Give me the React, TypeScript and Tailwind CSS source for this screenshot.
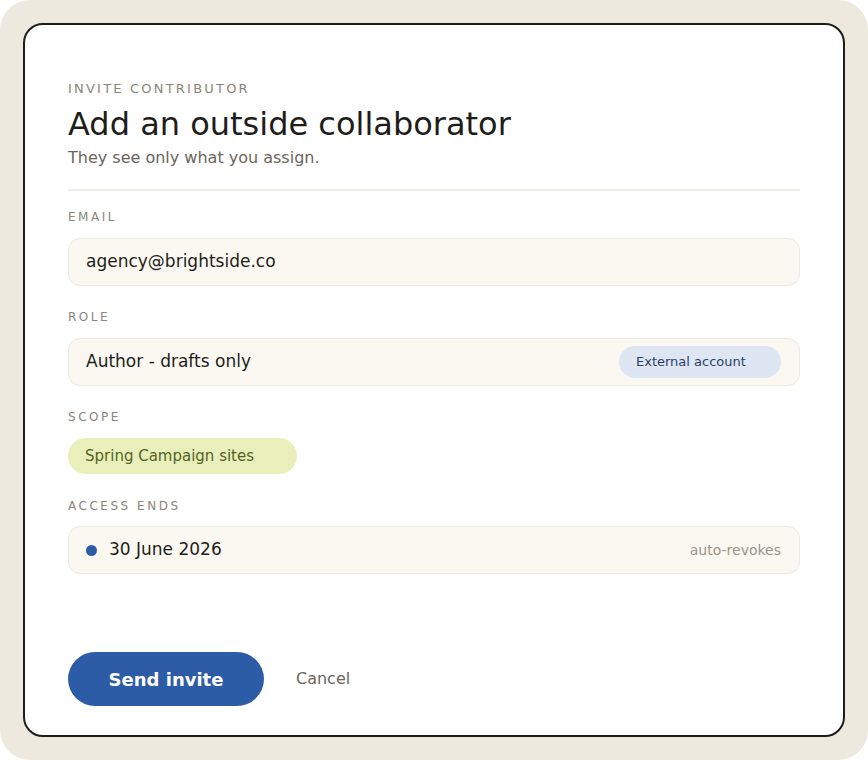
import React from "react";

const Label = ({ children, className = "" }: { children: React.ReactNode; className?: string }) => (
  <div className={`text-[12px] leading-[16px] tracking-[0.21em] text-[#8a857c] ${className}`}>{children}</div>
);

export default function App() {
  return (
    <div className="w-[868px] h-[760px] bg-white" style={{ fontFamily: '"DejaVu Sans", Verdana, sans-serif' }}>
      <div className="w-[868px] h-[760px] rounded-[30px] bg-[#ede9df] pt-[23px] pl-[23px]">
        <div className="w-[822px] h-[714px] rounded-[20px] border-2 border-[#1f1d1a] bg-white px-[43px] pt-[56px] flex flex-col">
          <div className="text-[13px] leading-[16px] tracking-[0.17em] text-[#8a857c]">INVITE CONTRIBUTOR</div>
          <h1 className="mt-[7px] text-[32px] leading-[40px] text-[#1f1d1a]">Add an outside collaborator</h1>
          <p className="mt-[4px] text-[16px] leading-[20px] text-[#6b655c]">They see only what you assign.</p>
          <div className="mt-[21px] h-[2px] bg-[#eeece7]" />

          <Label className="mt-[18px]">EMAIL</Label>
          <div className="mt-[13px] h-[48px] rounded-[12px] border border-[#ece9df] bg-[#faf8f1] px-[17px] flex items-center text-[17px] text-[#1f1d1a]">
            agency@brightside.co
          </div>

          <Label className="mt-[23px]">ROLE</Label>
          <div className="mt-[13px] h-[48px] rounded-[12px] border border-[#ece9df] bg-[#faf8f1] pl-[17px] pr-[18px] flex items-center justify-between text-[17px] text-[#1f1d1a]">
            <span>Author - drafts only</span>
            <span className="h-[32px] w-[162px] rounded-full bg-[#dee6f4] pl-[17px] flex items-center text-[13px] text-[#2c3f63]">External account</span>
          </div>

          <Label className="mt-[23px]">SCOPE</Label>
          <div className="mt-[13px] self-start h-[36px] w-[229px] rounded-full bg-[#e8efbb] pl-[17px] flex items-center text-[15px] text-[#56621e]">
            Spring Campaign sites
          </div>

          <Label className="mt-[24px]">ACCESS ENDS</Label>
          <div className="mt-[12px] h-[48px] rounded-[12px] border border-[#ece9df] bg-[#faf8f1] px-[18px] flex items-center text-[17px] text-[#1f1d1a]">
            <span className="w-[11px] h-[11px] rounded-full bg-[#2d5ca6] mr-[12px] -ml-[1px]" />
            <span>30 June 2026</span>
            <span className="ml-auto text-[14px] text-[#9a948a]">auto-revokes</span>
          </div>

          <div className="mt-[78px] flex items-center">
            <button className="h-[54px] w-[196px] rounded-full bg-[#2d5ca6] text-white text-[18px] font-bold">Send invite</button>
            <span className="ml-[32px] text-[16px] text-[#6b655c]">Cancel</span>
          </div>
        </div>
      </div>
    </div>
  );
}
